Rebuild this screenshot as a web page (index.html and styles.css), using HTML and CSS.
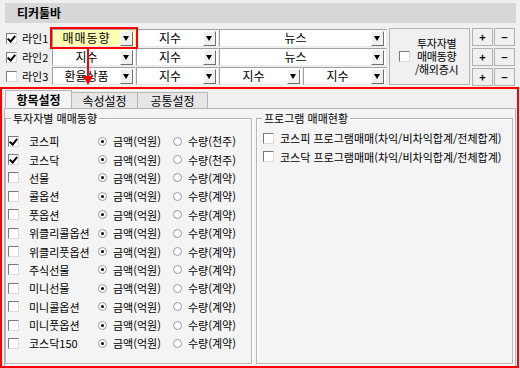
FILE: index.html
```html
<!DOCTYPE html>
<html lang="ko">
<head>
<meta charset="utf-8">
<link rel="stylesheet" href="styles.css">
</head>
<body>
<div class="title">티커툴바</div>

<div class="toolbar">
  <div class="lines">
    <div class="line"><span class="cb on"></span><span>라인1</span></div>
    <div class="line"><span class="cb on"></span><span>라인2</span></div>
    <div class="line"><span class="cb"></span><span>라인3</span></div>
  </div>
  <div class="combos">
    <div class="combo hl"><span class="ct">매매동향</span><span class="dd"></span></div>
    <div class="combo"><span class="ct">지수</span><span class="dd"></span></div>
    <div class="combo wide"><span class="ct">뉴스</span><span class="dd"></span></div>
    <div class="combo"><span class="ct">지수</span><span class="dd"></span></div>
    <div class="combo"><span class="ct">지수</span><span class="dd"></span></div>
    <div class="combo wide"><span class="ct">뉴스</span><span class="dd"></span></div>
    <div class="combo"><span class="ct">환율상품</span><span class="dd"></span></div>
    <div class="combo"><span class="ct">지수</span><span class="dd"></span></div>
    <div class="combo"><span class="ct">지수</span><span class="dd"></span></div>
    <div class="combo"><span class="ct">지수</span><span class="dd"></span></div>
    <div class="arrow"></div>
  </div>
  <div class="sidebox">
    <span class="cb"></span>
    <span class="sidetext">투자자별<br>매매동향<br>/해외증시</span>
  </div>
  <div class="pm">
    <span class="btn">+</span><span class="btn">−</span>
    <span class="btn">+</span><span class="btn">−</span>
    <span class="btn">+</span><span class="btn">−</span>
  </div>
</div>

<div class="main">
  <div class="tabs">
    <span class="tab active">항목설정</span>
    <span class="tab">속성설정</span>
    <span class="tab">공통설정</span>
  </div>
  <div class="panel">
    <div class="group g1">
      <span class="legend">투자자별 매매동향</span>
      <div class="items">
        <div class="item"><span class="cb on"></span><span class="nm">코스피</span><span class="rd on"></span><span class="r1">금액(억원)</span><span class="rd"></span><span>수량(천주)</span></div>
        <div class="item"><span class="cb on"></span><span class="nm">코스닥</span><span class="rd on"></span><span class="r1">금액(억원)</span><span class="rd"></span><span>수량(천주)</span></div>
        <div class="item"><span class="cb"></span><span class="nm">선물</span><span class="rd on"></span><span class="r1">금액(억원)</span><span class="rd"></span><span>수량(계약)</span></div>
        <div class="item"><span class="cb"></span><span class="nm">콜옵션</span><span class="rd on"></span><span class="r1">금액(억원)</span><span class="rd"></span><span>수량(계약)</span></div>
        <div class="item"><span class="cb"></span><span class="nm">풋옵션</span><span class="rd on"></span><span class="r1">금액(억원)</span><span class="rd"></span><span>수량(계약)</span></div>
        <div class="item"><span class="cb"></span><span class="nm">위클리콜옵션</span><span class="rd on"></span><span class="r1">금액(억원)</span><span class="rd"></span><span>수량(계약)</span></div>
        <div class="item"><span class="cb"></span><span class="nm">위클리풋옵션</span><span class="rd on"></span><span class="r1">금액(억원)</span><span class="rd"></span><span>수량(계약)</span></div>
        <div class="item"><span class="cb"></span><span class="nm">주식선물</span><span class="rd on"></span><span class="r1">금액(억원)</span><span class="rd"></span><span>수량(계약)</span></div>
        <div class="item"><span class="cb"></span><span class="nm">미니선물</span><span class="rd on"></span><span class="r1">금액(억원)</span><span class="rd"></span><span>수량(계약)</span></div>
        <div class="item"><span class="cb"></span><span class="nm">미니콜옵션</span><span class="rd on"></span><span class="r1">금액(억원)</span><span class="rd"></span><span>수량(계약)</span></div>
        <div class="item"><span class="cb"></span><span class="nm">미니풋옵션</span><span class="rd on"></span><span class="r1">금액(억원)</span><span class="rd"></span><span>수량(계약)</span></div>
        <div class="item"><span class="cb"></span><span class="nm">코스닥150</span><span class="rd on"></span><span class="r1">금액(억원)</span><span class="rd"></span><span>수량(계약)</span></div>
      </div>
    </div>
    <div class="group g2">
      <span class="legend">프로그램 매매현황</span>
      <div class="items">
        <div class="item"><span class="cb"></span><span>코스피 프로그램매매(차익/비차익합계/전체합계)</span></div>
        <div class="item"><span class="cb"></span><span>코스닥 프로그램매매(차익/비차익합계/전체합계)</span></div>
      </div>
    </div>
  </div>
</div>
</body>
</html>
```
FILE: styles.css
```css
* { box-sizing: border-box; }
html, body { margin: 0; padding: 0; }
body {
  width: 520px;
  height: 368px;
  overflow: hidden;
  background: #f0f0f0;
  font-family: "Noto Sans CJK KR", "Noto Sans", sans-serif;
  font-size: 11px;
  color: #000;
}

.title {
  margin: 3px 4px 0 5px;
  height: 20px;
  background: #d7d7d7;
  font-weight: bold;
  font-size: 12px;
  line-height: 20px;
  padding-left: 12px;
}

/* toolbar */
.toolbar {
  display: flex;
  margin-top: 5px;
  padding-left: 6px;
  height: 58px;
}
.lines {
  display: flex;
  flex-direction: column;
  gap: 1px;
  padding-top: 1px;
  width: 46px;
}
.line {
  display: flex;
  align-items: center;
  gap: 5px;
  height: 18px;
}

.cb {
  display: inline-block;
  width: 11px;
  height: 11px;
  flex: none;
  background: #fff;
  border-top: 1px solid #7a7a7a;
  border-left: 1px solid #7a7a7a;
  border-right: 1px solid #dcdcdc;
  border-bottom: 1px solid #dcdcdc;
  position: relative;
}
.cb.on::after {
  content: "";
  position: absolute;
  left: 2px;
  top: 0px;
  width: 3px;
  height: 6px;
  border-right: 2px solid #000;
  border-bottom: 2px solid #000;
  transform: rotate(40deg);
}

.combos {
  position: relative;
  display: grid;
  grid-template-columns: 84px 83px 84px 84px;
  grid-auto-rows: 18px;
  row-gap: 1px;
  padding-top: 1px;
}
.combo {
  display: flex;
  align-items: center;
  background: #fff;
  border-top: 1px solid #a0a0a0;
  border-left: 1px solid #a0a0a0;
  border-right: 1px solid #e8e8e8;
  border-bottom: 1px solid #e8e8e8;
  font-size: 12px;
  padding-right: 2px;
}
.combo.wide { grid-column: span 2; }
.combo.hl {
  background: #ffffb4;
  outline: 2px solid #ff0000;
  outline-offset: 0;
  z-index: 1;
  letter-spacing: 1px;
}
.ct {
  flex: 1;
  text-align: center;
  line-height: 16px;
}
.dd {
  width: 13px;
  height: 15px;
  flex: none;
  background: #f0f0f0;
  border-top: 1px solid #fff;
  border-left: 1px solid #fff;
  border-right: 1px solid #707070;
  border-bottom: 1px solid #707070;
  position: relative;
}
.dd::after {
  content: "";
  position: absolute;
  left: 2px;
  top: 4px;
  border-left: 3.5px solid transparent;
  border-right: 3.5px solid transparent;
  border-top: 5px solid #000;
}
.arrow {
  position: absolute;
  left: 35px;
  top: 20px;
  width: 2px;
  height: 30px;
  background: #ff0000;
  z-index: 2;
}
.arrow::after {
  content: "";
  position: absolute;
  left: -4px;
  top: 28px;
  border-left: 5px solid transparent;
  border-right: 5px solid transparent;
  border-top: 9px solid #ff0000;
}

.sidebox {
  margin-left: 2px;
  width: 81px;
  height: 57px;
  border: 1px solid #b4b4b4;
  display: flex;
  align-items: center;
  padding-left: 9px;
  gap: 5px;
  background: #f0f0f0;
}
.sidetext {
  text-align: center;
  line-height: 13px;
  letter-spacing: -0.3px;
}

.pm {
  margin-left: 2px;
  display: grid;
  grid-template-columns: 21px 21px;
  grid-template-rows: 18px 18px 18px;
  column-gap: 1px;
  row-gap: 2px;
  height: 58px;
}
.btn {
  border: 1px solid #b0b0b0;
  background: #f0f0f0;
  display: flex;
  align-items: center;
  justify-content: center;
  font-size: 11px;
  font-weight: bold;
}

/* main */
.main {
  margin: 1px 1px 0 0;
  height: 281px;
  border: 2px solid #ff0000;
  padding: 1px 1px 0 2px;
  display: flex;
  flex-direction: column;
}
.tabs {
  display: flex;
  align-items: flex-end;
  height: 18px;
  padding-left: 1px;
}
.tab {
  height: 16px;
  width: 66px;
  text-align: center;
  font-size: 12px;
  line-height: 15px;
  background: #e6e6e6;
  border: 1px solid #b5b5b5;
  border-bottom: none;
}
.tab + .tab { border-left: none; }
.tab:nth-child(3) { width: 70px; }
.tab.active {
  height: 18px;
  background: #f4f4f4;
  font-weight: bold;
  line-height: 17px;
  width: 67px;
}
.panel {
  flex: 1;
  background: #f4f4f4;
  border: 1px solid #b5b5b5;
  border-bottom: none;
  display: flex;
  gap: 4px;
  padding: 9px 2px 2px 0;
}
.group {
  position: relative;
  border: 1px solid #b5b5b5;
  box-shadow: inset 1px 1px 0 #fff, 1px 1px 0 #fff;
  padding: 13px 0 0 2px;
}
.g1 { width: 247px; }
.g2 { flex: 1; padding-left: 6px; padding-top: 10px; }
.g2 .item .cb { margin-right: 6px; }
.legend {
  position: absolute;
  top: -8px;
  left: 5px;
  background: #f4f4f4;
  padding: 0 2px;
  line-height: 14px;
}
.items {
  display: flex;
  flex-direction: column;
}
.item {
  display: flex;
  align-items: center;
  height: 18.4px;
}
.item .cb { margin-right: 10px; }
.nm { width: 69px; }
.rd {
  width: 9px;
  height: 9px;
  border-radius: 50%;
  background: #fff;
  border: 1px solid #9a9a9a;
  position: relative;
  flex: none;
  margin-right: 6px;
}
.rd.on::after {
  content: "";
  position: absolute;
  left: 2px;
  top: 2px;
  width: 3px;
  height: 3px;
  border-radius: 50%;
  background: #000;
}
.r1 { width: 60px; }
```
